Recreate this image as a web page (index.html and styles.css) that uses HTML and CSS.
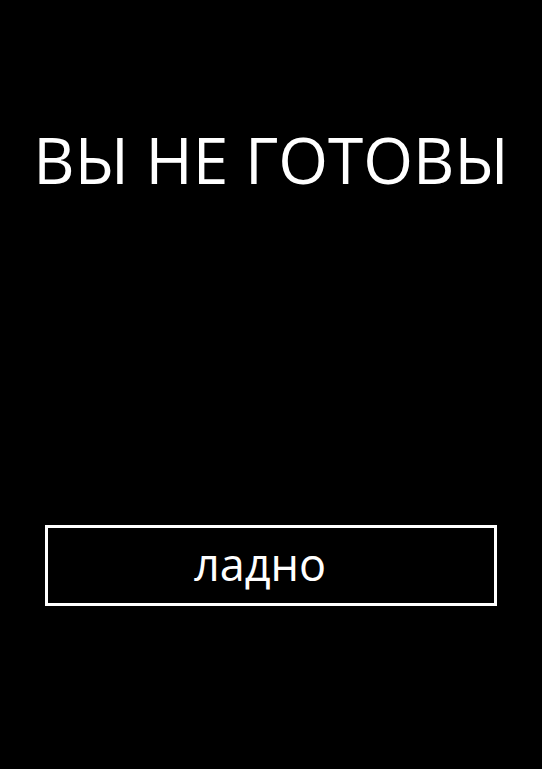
FILE: index.html
```html
<!DOCTYPE html>
<html lang="ru">
<head>
<meta charset="utf-8">
<title>ВЫ НЕ ГОТОВЫ</title>
<link rel="stylesheet" href="styles.css">
</head>
<body>
<main class="screen">
  <h1 class="title">ВЫ НЕ ГОТОВЫ</h1>
  <button class="ok-button" type="button">ладно</button>
</main>
</body>
</html>
```

FILE: styles.css
```css
html, body {
  margin: 0;
  padding: 0;
  background: #000;
}

.screen {
  width: 542px;
  height: 769px;
  display: flex;
  flex-direction: column;
  align-items: center;
  padding-top: 128px;
  box-sizing: border-box;
  font-family: "Open Sans", "Noto Sans", sans-serif;
  color: #fff;
}

.title {
  margin: 0;
  font-size: 64px;
  line-height: 64px;
  font-weight: 400;
  white-space: nowrap;
}

.ok-button {
  margin-top: 333px;
  width: 452px;
  height: 81px;
  box-sizing: border-box;
  border: 3px solid #fff;
  background: #000;
  color: #fff;
  font-family: inherit;
  font-size: 45px;
  line-height: 45px;
  padding: 0 22px 5px 0;
  display: flex;
  align-items: center;
  justify-content: center;
}
```
